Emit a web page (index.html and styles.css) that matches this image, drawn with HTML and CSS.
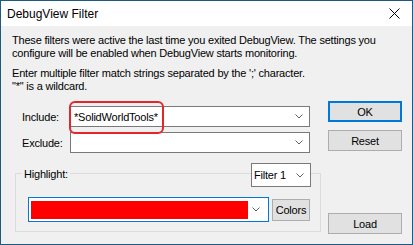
FILE: index.html
```html
<!DOCTYPE html>
<html lang="en">
  <head>
    <meta charset="UTF-8" />
    <title>DebugView Filter</title>
    <link rel="stylesheet" href="styles.css">
  </head>
  <body>
    <div class="window">
      <div class="titlebar">
        <span class="title">DebugView Filter</span>
        <svg class="close" width="11" height="11" viewBox="0 0 11 11">
          <path d="M0.5 0.5 L10.5 10.5 M10.5 0.5 L0.5 10.5" stroke="#000" stroke-width="1" fill="none"/>
        </svg>
      </div>

      <div class="content">
        <div class="intro">
          <p>These filters were active the last time you exited DebugView. The settings you configure will be enabled when DebugView starts monitoring.</p>
          <p>Enter multiple filter match strings separated by the ';' character.<br>"*" is a wildcard.</p>
        </div>

        <div class="form">
          <div class="fields">
            <div class="row">
              <label>Include:</label>
              <div class="combo">
                <span class="combo-text">*SolidWorldTools*</span>
                <svg class="chev" width="8" height="5" viewBox="0 0 8 5"><path d="M0.5 0.5 L4 4 L7.5 0.5" stroke="#606060" fill="none"/></svg>
              </div>
            </div>
            <div class="row">
              <label>Exclude:</label>
              <div class="combo">
                <span class="combo-text"></span>
                <svg class="chev" width="8" height="5" viewBox="0 0 8 5"><path d="M0.5 0.5 L4 4 L7.5 0.5" stroke="#606060" fill="none"/></svg>
              </div>
            </div>

            <div class="group">
              <div class="group-head">
                <span class="legend">Highlight:</span>
                <div class="combo filter">
                  <span class="combo-text">Filter 1</span>
                  <svg class="chev" width="8" height="5" viewBox="0 0 8 5"><path d="M0.5 0.5 L4 4 L7.5 0.5" stroke="#606060" fill="none"/></svg>
                </div>
              </div>
              <div class="color-row">
                <div class="combo color">
                  <span class="swatch"></span>
                  <svg class="chev" width="8" height="5" viewBox="0 0 8 5"><path d="M0.5 0.5 L4 4 L7.5 0.5" stroke="#606060" fill="none"/></svg>
                </div>
                <button class="btn small">Colors</button>
              </div>
            </div>
          </div>

          <div class="actions">
            <button class="btn default">OK</button>
            <button class="btn">Reset</button>
            <button class="btn load">Load</button>
          </div>
        </div>

        <div class="callout"></div>
      </div>
    </div>
  </body>
</html>
```

FILE: styles.css
```css
body {
  margin: 0;
  background: #f0f0f0;
  font-family: "Liberation Sans", Arial, sans-serif;
  font-size: 11px;
  letter-spacing: -0.2px;
  color: #000;
}

.window {
  width: 413px;
  height: 245px;
  border: 1px solid #1d5a80;
  box-sizing: border-box;
  display: flex;
  flex-direction: column;
}

.titlebar {
  height: 25px;
  background: #fff;
  display: flex;
  align-items: center;
  justify-content: space-between;
  padding: 0 12px 0 6px;
}

.title {
  font-size: 12px;
  letter-spacing: 0;
}

.content {
  flex: 1;
  background: #f0f0f0;
  padding: 8px 0 0 11px;
  position: relative;
}

.intro p {
  margin: 0 0 7px;
  line-height: 13px;
}

.intro p:last-child {
  margin-bottom: 0;
}

.form {
  display: flex;
  margin-top: 8px;
}

.fields {
  width: 309px;
  padding-top: 5px;
}

.row {
  display: flex;
  align-items: center;
  height: 21px;
  padding-left: 10px;
}

.row + .row {
  margin-top: 5px;
}

.row label {
  width: 48px;
}

.combo {
  display: flex;
  align-items: center;
  background: #fff;
  border: 1px solid #7a7a7a;
  box-sizing: border-box;
  width: 240px;
  height: 21px;
}

.combo-text {
  flex: 1;
  padding-left: 3px;
}

.chev {
  margin-right: 6px;
}

.group {
  margin: 20px 0 0 3px;
  width: 306px;
  height: 59px;
  box-sizing: border-box;
  border: 1px solid #dcdcdc;
}

.group-head {
  display: flex;
  align-items: flex-start;
  margin-top: -11px;
}

.legend {
  margin: 5px 0 0 6px;
  padding: 0 2px;
  line-height: 13px;
  background: #f0f0f0;
}

.combo.filter {
  margin-left: auto;
  margin-right: 9px;
  width: 60px;
  height: 24px;
}

.combo.filter .combo-text {
  padding-left: 2px;
}

.color-row {
  display: flex;
  align-items: center;
  margin: 10px 0 0 12px;
}

.combo.color {
  width: 241px;
  height: 25px;
  border-color: #0078d7;
  padding: 2px;
}

.swatch {
  width: 217px;
  height: 18px;
  background: #ff0000;
  margin-right: auto;
}

.btn {
  font-family: inherit;
  font-size: 11px;
  letter-spacing: inherit;
  color: #000;
  background: #e1e1e1;
  border: 1px solid #adadad;
  box-sizing: border-box;
  width: 74px;
  height: 21px;
  padding: 0;
}

.btn.default {
  border: 2px solid #0078d7;
}

.btn.small {
  width: 38px;
  height: 22px;
  margin-left: 3px;
}

.actions {
  display: flex;
  flex-direction: column;
  margin-left: 7px;
}

.actions .btn + .btn {
  margin-top: 8px;
}

.actions .btn.load {
  margin-top: 62px;
}

.callout {
  position: absolute;
  left: 68px;
  top: 75px;
  width: 95px;
  height: 33px;
  box-sizing: border-box;
  border: 2px solid #e3262b;
  border-radius: 6px;
}
```
